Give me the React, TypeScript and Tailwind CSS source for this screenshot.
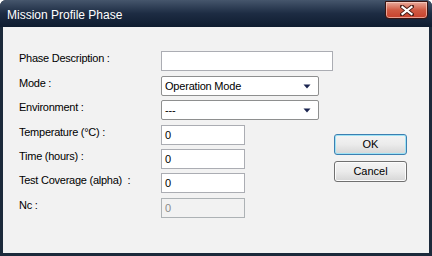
import React from 'react';

const font = { fontFamily: '"Liberation Sans", Arial, sans-serif' };

function Field({ value = '', width, disabled = false }: { value?: string; width: string; disabled?: boolean }) {
  return (
    <div
      className={`h-[20px] ${width} border flex items-center pl-[3px] text-[11px] ${
        disabled ? 'bg-[#f2f2f2] border-[#adb2b5] text-[#8a8a8a]' : 'bg-white border-[#abadb3] text-black'
      }`}
    >
      {value}
    </div>
  );
}

function Select({ value }: { value: string }) {
  return (
    <div className="h-[20px] w-[158px] border border-[#8e8f8f] rounded-[2px] bg-white flex items-center justify-between pl-[3px] pr-[7px] text-[11px] tracking-[-0.2px] text-black">
      <span>{value}</span>
      <svg width="8" height="5" viewBox="0 0 8 5">
        <path d="M0.5 0.5 L7.5 0.5 L4 4.5 Z" fill="#1a2450" />
      </svg>
    </div>
  );
}

function Row({ label, children, mt }: { label: string; children: React.ReactNode; mt: string }) {
  return (
    <div className={`flex items-start ${mt}`}>
      <div className="w-[142px] text-[11px] leading-[13px] tracking-[-0.25px] whitespace-pre text-black pt-[1px]">{label}</div>
      {children}
    </div>
  );
}

function Button({ label, focused = false }: { label: string; focused?: boolean }) {
  return (
    <div
      className={`w-[73px] h-[21px] rounded-[3px] border flex items-center justify-center text-[11px] text-black bg-gradient-to-b from-[#f4f4f4] via-[#ebebeb] to-[#d6d6d6] ${
        focused ? 'border-[#3c7fb1] shadow-[inset_0_0_0_1px_#9fe3f5]' : 'border-[#707070] shadow-[inset_0_0_0_1px_#fcfcfc]'
      }`}
    >
      {label}
    </div>
  );
}

export default function App() {
  return (
    <div className="w-[432px] h-[256px] flex flex-col bg-[#1c2a3b] rounded-t-[6px] overflow-hidden" style={font}>
      {/* Title bar */}
      <div className="h-[27px] flex items-start justify-between bg-gradient-to-b from-[#46566c] via-[#1d2c43] to-[#0f1c30]">
        <span className="text-white text-[12px] leading-[14px] pl-[7px] pt-[8px]">Mission Profile Phase</span>
        <div className="mt-[1px] mr-[4px] w-[43px] h-[18px] rounded-b-[4px] border border-[#3b1410] bg-gradient-to-b from-[#e8aa9c] via-[#d05a43] to-[#c8402c] shadow-[inset_0_0_0_1px_rgba(255,220,210,0.6)] flex items-center justify-center">
          <svg width="14" height="11" viewBox="0 0 14 11">
            <path d="M2 1.5 L12 9.5 M12 1.5 L2 9.5" stroke="#4a1e18" strokeWidth="4" strokeLinecap="square" />
            <path d="M2.5 2 L11.5 9 M11.5 2 L2.5 9" stroke="#ffffff" strokeWidth="2.2" strokeLinecap="square" />
          </svg>
        </div>
      </div>

      {/* Client area */}
      <div className="flex-1 mx-[3px] mb-[3px] bg-[#f2f2f2] flex pt-[24px] pl-[16px]">
        <div className="flex flex-col">
          <Row label="Phase Description :" mt="mt-0">
            <Field width="w-[172px]" />
          </Row>
          <Row label="Mode :" mt="mt-[5px]">
            <Select value="Operation Mode" />
          </Row>
          <Row label="Environment :" mt="mt-[4px]">
            <Select value="---" />
          </Row>
          <Row label="Temperature (°C) :" mt="mt-[5px]">
            <Field width="w-[84px]" value="0" />
          </Row>
          <Row label="Time (hours) :" mt="mt-[4px]">
            <Field width="w-[84px]" value="0" />
          </Row>
          <Row label="Test Coverage (alpha)  :" mt="mt-[4px]">
            <Field width="w-[84px]" value="0" />
          </Row>
          <Row label="Nc :" mt="mt-[5px]">
            <Field width="w-[84px]" value="0" disabled />
          </Row>
        </div>
        <div className="flex flex-col gap-[6px] ml-[1px] pt-[83px]">
          <Button label="OK" focused />
          <Button label="Cancel" />
        </div>
      </div>
    </div>
  );
}
